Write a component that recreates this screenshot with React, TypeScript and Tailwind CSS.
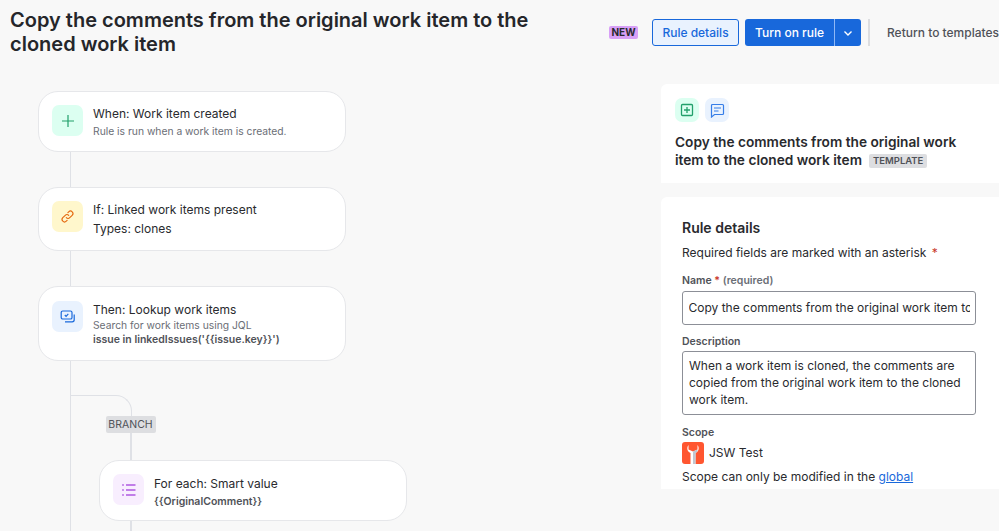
import React from "react";

const font = { fontFamily: "Inter, 'Liberation Sans', sans-serif" };

function IconBox({ bg, children }: { bg: string; children: React.ReactNode }) {
  return <div className={`w-[31px] h-[31px] rounded-[7px] flex items-center justify-center shrink-0 ${bg}`}>{children}</div>;
}

function Card({ className, icon, children }: { className: string; icon: React.ReactNode; children: React.ReactNode }) {
  return (
    <div className={`w-[308px] shrink-0 bg-white border border-[#e6e7ea] rounded-[20px] pl-[13px] flex items-start ${className}`}>
      {icon}
      <div className="ml-[10px] flex flex-col">{children}</div>
    </div>
  );
}

const Line = ({ h }: { h: string }) => <div className={`ml-[31.5px] w-[1.5px] shrink-0 bg-[#dfe1e6] ${h}`} />;

export default function App() {
  return (
    <div style={font} className="w-[999px] h-[531px] overflow-hidden bg-[#f8f8f8] text-[#292a2e] flex flex-col">
      <header className="h-[84px] shrink-0 flex items-start pl-[10px]">
        <h1 className="w-[560px] shrink-0 mt-[8px] text-[20px] leading-[24px] font-semibold text-[#25262a]">
          Copy the comments from the original work item to the cloned work item
        </h1>
        <div className="ml-[39px] mt-[19px] flex items-center shrink-0 h-[27px] whitespace-nowrap">
          <span className="h-[13px] w-[29px] bg-[#d8a0f7] rounded-[2px] text-[10px] leading-[13px] font-bold text-center text-[#292a2e]">NEW</span>
          <button className="ml-[14px] w-[87px] h-[27px] rounded-[3px] border border-[#1868db] bg-[#e9f2fe] text-[#1868db] text-[12px] font-medium">Rule details</button>
          <div className="ml-[6px] flex h-[27px] rounded-[3px] overflow-hidden bg-[#1868db] text-white">
            <button className="w-[90px] text-[12px] font-medium border-r border-[#8fb8f6]">Turn on rule</button>
            <button className="w-[26px] flex items-center justify-center">
              <svg width="12" height="12" viewBox="0 0 12 12" fill="none" stroke="#fff" strokeWidth="1.4"><path d="M2.5 4.500 6 8l3.500-3.500" /></svg>
            </button>
          </div>
          <div className="ml-[7px] w-[2px] h-[27px] bg-[#dcdde0]" />
          <span className="ml-[17px] text-[12px] font-medium text-[#505258]">Return to templates</span>
        </div>
      </header>

      <div className="flex flex-1 min-h-0">
        <section className="w-[661px] shrink-0 pl-[38px] pt-[7px] flex flex-col">
          <Card className="h-[61px] pt-[13px]" icon={
            <IconBox bg="bg-[#dcfff1]">
              <svg width="16" height="16" viewBox="0 0 16 16" fill="none" stroke="#22a06b" strokeWidth="1.2"><path d="M8 2v12M2 8h12" /></svg>
            </IconBox>
          }>
            <span className="text-[12px] leading-[16px] mt-[1px]">When: Work item created</span>
            <span className="text-[10.3px] leading-[14px] mt-[2px] text-[#6b6e76]">Rule is run when a work item is created.</span>
          </Card>
          <Line h="h-[35px]" />
          <Card className="h-[64px] pt-[13px]" icon={
            <IconBox bg="bg-[#fff7cc]">
              <svg width="15" height="15" viewBox="0 0 16 16" fill="none" stroke="#e56910" strokeWidth="1.2" strokeLinecap="round"><path d="M6.700 9.300a2.600 2.600 0 0 0 3.700 0l2.600-2.600a2.600 2.600 0 0 0-3.700-3.700L8.400 3.900" /><path d="M9.300 6.700a2.600 2.600 0 0 0-3.700 0L3 9.300A2.600 2.600 0 0 0 6.700 13l.9-.9" /></svg>
            </IconBox>
          }>
            <span className="text-[12px] leading-[16px] mt-[1px]">If: Linked work items present</span>
            <span className="text-[12px] leading-[16px] mt-[3px]">Types: clones</span>
          </Card>
          <Line h="h-[35px]" />
          <Card className="h-[75px] pt-[14px]" icon={
            <IconBox bg="bg-[#e9f2fe]">
              <svg width="16" height="16" viewBox="0 0 16 16" fill="none" stroke="#1868db" strokeWidth="1.2"><rect x="1.200" y="2" width="10.800" height="8" rx="1.600" /><path d="m4.800 6 1.300 1.300 2.200-2.400" /><path d="M14.200 5.500v5.300a2 2 0 0 1-2 2H5" /></svg>
            </IconBox>
          }>
            <span className="text-[12px] leading-[16px] mt-[1px]">Then: Lookup work items</span>
            <span className="text-[10.3px] leading-[14px] text-[#6b6e76]">Search for work items using JQL</span>
            <span className="text-[10.5px] leading-[14px] mt-[1px] font-semibold text-[#505258]">issue in linkedIssues('{"{{"}issue.key{"}}"}')</span>
          </Card>
          <div className="ml-[31.5px] flex-1 border-l-[1.5px] border-[#dfe1e6]">
            <div className="mt-[34px] w-[61px] h-[21px] border-t-[1.5px] border-r-[1.5px] border-[#dfe1e6] rounded-tr-[16px]" />
            <div className="ml-[35px] w-[50px] h-[17px] bg-[#dddee1] rounded-[2px] text-[10.5px] leading-[17px] text-center text-[#505258]">BRANCH</div>
            <div className="ml-[59.500px] w-[1.500px] h-[27px] bg-[#dfe1e6]" />
            <Card className="ml-[28.500px] h-[61px] pt-[13px]" icon={
              <IconBox bg="bg-[#f8eefe]">
                <svg width="16" height="16" viewBox="0 0 16 16" fill="none" stroke="#af59e1" strokeWidth="1.3"><path d="M5 3h9.500M5 8h9.500M5 13h9.500" /><path d="M1.400 3h1.200M1.400 8h1.200M1.400 13h1.200" strokeWidth="1.800" /></svg>
              </IconBox>
            }>
              <span className="text-[12px] leading-[16px] mt-[2px]">For each: Smart value</span>
              <span className="text-[10.5px] leading-[14px] mt-[3px] font-semibold text-[#505258]">{"{{OriginalComment}}"}</span>
            </Card>
            <div className="ml-[59.500px] w-[1.500px] h-[20px] bg-[#dfe1e6]" />
          </div>
        </section>

        <aside className="w-[338px] shrink-0 flex flex-col">
          <div className="h-[99px] shrink-0 bg-white rounded-tl-[6px] pl-[14px] pt-[14px]">
            <div className="flex gap-[6px]">
              <div className="w-[24px] h-[24px] rounded-[7px] bg-[#dcfff1] flex items-center justify-center">
                <svg width="14" height="14" viewBox="0 0 14 14" fill="none" stroke="#22a06b" strokeWidth="1.300"><rect x="1.500" y="1.500" width="11" height="11" rx="1" /><path d="M7 4v6M4 7h6" /></svg>
              </div>
              <div className="w-[24px] h-[24px] rounded-[7px] bg-[#e9f2fe] flex items-center justify-center">
                <svg width="15" height="15" viewBox="0 0 15 15" fill="none" stroke="#357de8" strokeWidth="1.200"><path d="M2.500 1.500h10a1 1 0 0 1 1 1v8a1 1 0 0 1-1 1H4.500L1.500 14V2.500a1 1 0 0 1 1-1Z" /><path d="M4 5h7M4 8h4.500" /></svg>
              </div>
            </div>
            <div className="mt-[12px] text-[13.7px] leading-[17.500px] font-semibold w-[300px]">
              Copy the comments from the original work item to the cloned work item
              <span className="ml-[7px] inline-block align-[1px] h-[14px] px-[4px] bg-[#dddee1] rounded-[2px] text-[9.500px] leading-[14px] font-semibold text-[#505258]">TEMPLATE</span>
            </div>
          </div>
          <div className="mt-[14px] h-[292px] shrink-0 overflow-hidden bg-white rounded-tl-[6px] pl-[21px] pr-[23px] pt-[22px]">
            <div className="text-[14px] leading-[18px] font-semibold">Rule details</div>
            <div className="mt-[7px] text-[12px] leading-[18px]">Required fields are marked with an asterisk <span className="ml-[2px] text-[#c9372c]">*</span></div>
            <div className="mt-[12px] text-[10.500px] leading-[14px] font-semibold text-[#505258]">Name<span className="text-[#c9372c]"> *</span> <span className="text-[#6b6e76]">(required)</span></div>
            <div className="mt-[3px] h-[34px] border border-[#8c8f97] rounded-[3px] px-[5.500px] text-[12px] leading-[32px]">
              <div className="whitespace-nowrap overflow-hidden">Copy the comments from the original work item to the cloned work item</div>
            </div>
            <div className="mt-[10px] text-[10.500px] leading-[14px] font-semibold text-[#505258]">Description</div>
            <div className="mt-[2px] h-[64px] border border-[#8c8f97] rounded-[3px] pl-[6px] pr-[6px] pt-[5px] text-[12px] leading-[17px]">When a work item is cloned, the comments are copied from the original work item to the cloned work item.</div>
            <div className="mt-[11px] text-[10.500px] leading-[14px] font-semibold text-[#505258]">Scope</div>
            <div className="mt-[2px] flex items-center gap-[5px] h-[22px]">
              <svg width="22" height="22" viewBox="0 0 22 22"><rect width="22" height="22" rx="3" fill="#ff5630" /><path d="M6.500 3C4.500 5.500 5 9.500 8.500 11V22h5V11C17 9.500 17.500 5.500 15.500 3v4.500L11 9.500 6.500 7.500Z" fill="#fff" /><path d="M11 9.500l4.500-2V9c0 1-2 2-2 2V22H11Z" fill="#c1c7d0" /></svg>
              <span className="text-[12px]">JSW Test</span>
            </div>
            <div className="mt-[3px] text-[12px] leading-[20px]">Scope can only be modified in the <a className="text-[#1868db] underline">global administration</a></div>
          </div>
        </aside>
      </div>
    </div>
  );
}
